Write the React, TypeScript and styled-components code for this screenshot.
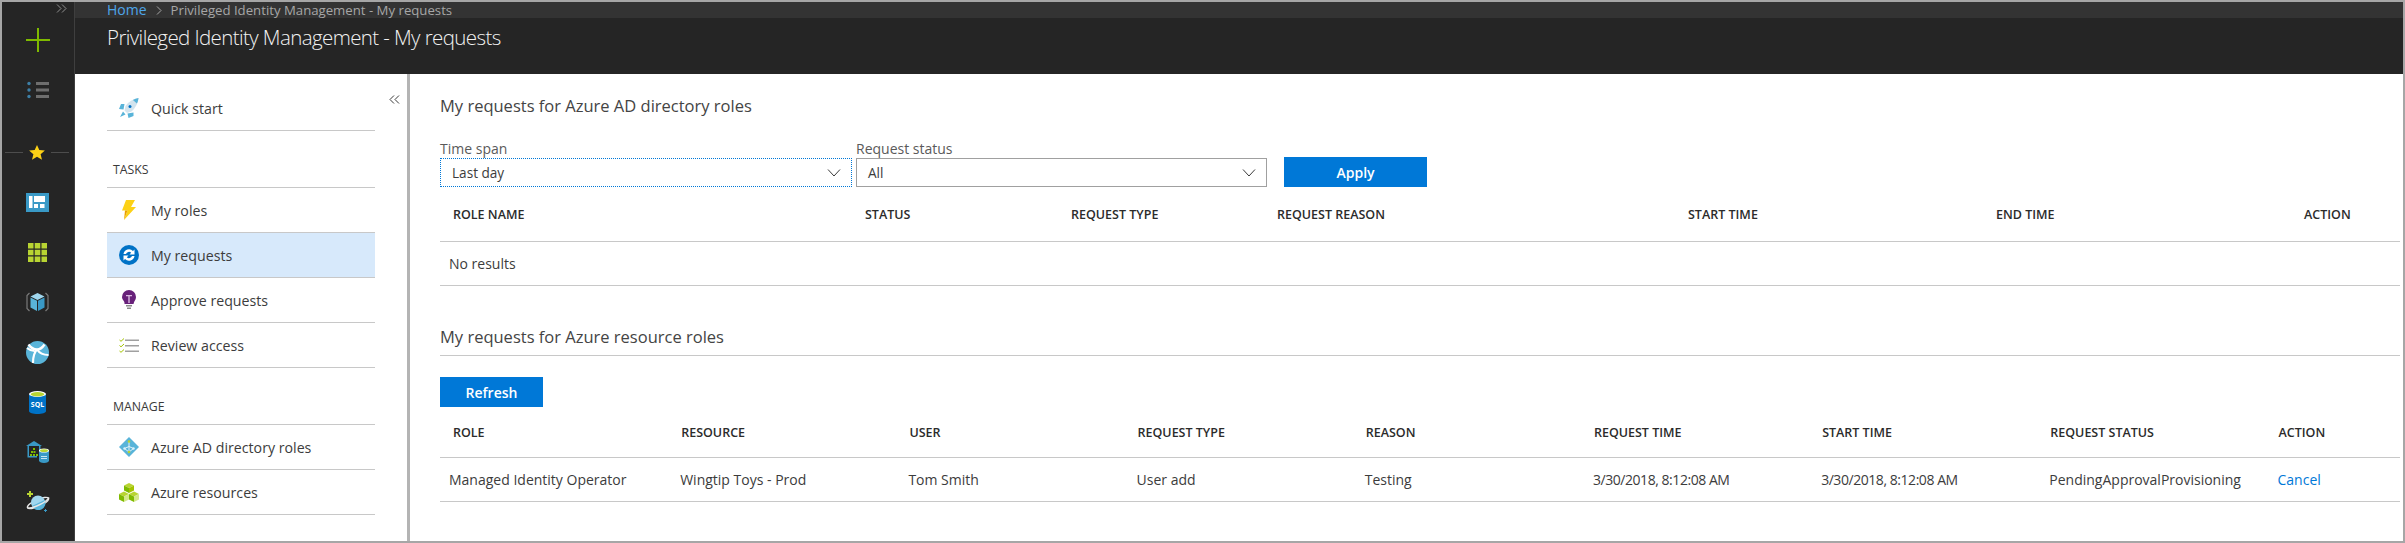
import styled, { createGlobalStyle } from 'styled-components'

const GlobalStyle = createGlobalStyle`
  html, body {
    margin: 0;
    padding: 0;
    background: #fff;
  }
  * {
    box-sizing: border-box;
  }
`

const roleHeaders = ['ROLE NAME', 'STATUS', 'REQUEST TYPE', 'REQUEST REASON', 'START TIME', 'END TIME', 'ACTION']
const resourceHeaders = ['ROLE', 'RESOURCE', 'USER', 'REQUEST TYPE', 'REASON', 'REQUEST TIME', 'START TIME', 'REQUEST STATUS', 'ACTION']
const resourceRow = ['Managed Identity Operator', 'Wingtip Toys - Prod', 'Tom Smith', 'User add', 'Testing']
const resourceTimes = ['3/30/2018, 8:12:08 AM', '3/30/2018, 8:12:08 AM']

const ROLE_COLS = '412px 206px 206px 411px 308px 308px 1fr'
const RESOURCE_COLS = 'repeat(8, 228.2px) 1fr'

export default function App() {
  return (
    <Frame>
      <GlobalStyle />
      <Sidebar>
        <Expand>
          <svg width="11" height="9" viewBox="0 0 11 9" fill="none" stroke="#8f8f8f" strokeWidth="1">
            <path d="M1 0.5 5 4.5 1 8.5M6 0.5 10 4.5 6 8.5" />
          </svg>
        </Expand>
        <SideItem>
          <svg width="24" height="24" viewBox="0 0 24 24">
            <path d="M11 0h2v11h11v2H13v11h-2V13H0v-2h11z" fill="#7fba00" />
          </svg>
        </SideItem>
        <SideItem>
          <svg width="22" height="18" viewBox="0 0 22 18">
            <circle cx="2" cy="2.5" r="1.7" fill="#3d7fa6" />
            <circle cx="2" cy="9" r="1.7" fill="#3d7fa6" />
            <circle cx="2" cy="15.5" r="1.7" fill="#3d7fa6" />
            <path d="M9 1h13v3H9zM9 7.5h13v3H9zM9 14h13v3H9z" fill="#6e6e6e" />
          </svg>
        </SideItem>
        <FavItem>
          <FavRule />
          <svg width="16" height="15" viewBox="0 0 16 15">
            <path d="M8 0l2.3 5.1 5.6.5-4.3 3.6 1.4 5.5L8 11.7l-5 3 1.4-5.5L.1 5.6l5.6-.5z" fill="#fcd116" />
          </svg>
          <FavRule />
        </FavItem>
        <SideItem>
          <svg width="23" height="19" viewBox="0 0 23 19">
            <path d="M0 0h23v19H0z" fill="#3999c6" />
            <path d="M3 3h3.500v12H3zM8 3h11v6H8zM8 11h4v4H8zM14 11h4.500v4H14z" fill="#fff" />
          </svg>
        </SideItem>
        <SideItem>
          <svg width="19" height="19" viewBox="0 0 19 19" fill="#b8d432">
            <path d="M0 0h5.500v5.500H0zM6.700 0h5.600v5.500H6.700zM13.500 0H19v5.500h-5.500zM0 6.700h5.500v5.600H0zM6.700 6.700h5.600v5.600H6.700zM13.500 6.700H19v5.600h-5.500zM0 13.500h5.500V19H0zM6.700 13.500h5.600V19H6.700zM13.500 13.500H19V19h-5.500z" />
          </svg>
        </SideItem>
        <SideItem>
          <svg width="23" height="20" viewBox="0 0 23 20">
            <path d="M3.500 1 1 3.500v13L3.500 19M19.500 1 22 3.500v13L19.500 19" fill="none" stroke="#7a7a7a" strokeWidth="1.200" />
            <path d="M11.500 1l7 3.500-7 3.500-7-3.500z" fill="#a0d7ef" />
            <path d="M4.500 5.500l6.500 3.300V19l-6.500-3.500z" fill="#59b4d9" />
            <path d="M18.500 5.500L12 8.800V19l6.500-3.500z" fill="#3999c6" />
          </svg>
        </SideItem>
        <SideItem>
          <svg width="23" height="23" viewBox="0 0 23 23">
            <circle cx="11.500" cy="11.500" r="11.500" fill="#59b4d9" />
            <path d="M2.500 3.500C5 7 7.500 8.500 11 8.500c3 0 5.500-2 7.500-5" fill="none" stroke="#fff" strokeWidth="2.400" />
            <path d="M11 8.500c2 3 5.500 5.500 11.500 5.500M11 8.500c-2.500 2.500-4 7-4 13.500M1 7c2.500 2 5 3 7.500 3" fill="none" stroke="#fff" strokeWidth="2.200" />
          </svg>
        </SideItem>
        <SideItem>
          <svg width="17" height="23" viewBox="0 0 17 23">
            <path d="M0 3v17c0 2 4 3 8.500 3s8.500-1 8.500-3V3z" fill="#0072c6" />
            <ellipse cx="8.500" cy="3" rx="8.500" ry="3" fill="#fff" />
            <ellipse cx="8.500" cy="3.300" rx="6.800" ry="2.200" fill="#b8d432" />
            <text x="8.500" y="16" textAnchor="middle" fontFamily="'Open Sans', sans-serif" fontSize="7" fontWeight="700" fill="#fff">SQL</text>
          </svg>
        </SideItem>
        <SideItem>
          <svg width="23" height="22" viewBox="0 0 23 22">
            <path d="M8 0l8 5H0z" fill="#3999c6" />
            <path d="M1.500 5h1.500v10h8v1.500H1.500zM13 5h1.500v5H13z" fill="#3999c6" />
            <path d="M7 7h2v2H7zM5 10h2v2H5zM7.500 10h2v2h-2zM4 13h2v2H4zM7 13h2v2H7zM10 13h2v2h-2z" fill="#7fba00" />
            <path d="M13 9.500v10c0 1.500 2 2.500 5 2.500s5-1 5-2.500v-10z" fill="#3999c6" />
            <ellipse cx="18" cy="9.500" rx="5" ry="2" fill="#fff" />
            <ellipse cx="18" cy="9.700" rx="4" ry="1.400" fill="#b8d432" />
            <path d="M15 15h6v1h-6zM15 17h6v1h-6z" fill="#c4e6f5" />
          </svg>
        </SideItem>
        <SideItem>
          <svg width="24" height="22" viewBox="0 0 24 22">
            <path d="M3 0h2v2h2v2H5v2H3V4H1V2h2z" fill="#b8d432" />
            <path d="M19 18h1v1h1v1h-1v1h-1v-1h-1v-1h1z" fill="#3999c6" />
            <ellipse cx="12" cy="12" rx="11.500" ry="3.500" transform="rotate(-24 12 12)" fill="none" stroke="#e8e8e8" strokeWidth="1.400" />
            <circle cx="12" cy="11.500" r="7" fill="#a0d7ef" />
            <path d="M6 15a7 7 0 0 0 12.800-6c-3 1-9 4.500-12.800 6z" fill="#59b4d9" />
            <path d="M1.500 16.800C4 17.500 9 16 14 13.500s8-5 9-7" fill="none" stroke="#e8e8e8" strokeWidth="1.400" />
          </svg>
        </SideItem>
      </Sidebar>
      <Main>
        <Breadcrumb>
          <HomeLink>Home</HomeLink>
          <svg width="6" height="9" viewBox="0 0 6 9" fill="none" stroke="#a6a6a6" strokeWidth="1">
            <path d="M1 .5 5 4.500 1 8.500" />
          </svg>
          <span>Privileged Identity Management - My requests</span>
        </Breadcrumb>
        <TitleBar>Privileged Identity Management - My requests</TitleBar>
        <Body>
          <Nav>
            <Collapse>
              <svg width="11" height="9" viewBox="0 0 11 9" fill="none" stroke="#3a3a3a" strokeWidth="1">
                <path d="M5 .5 1 4.500 5 8.500M10 .5 6 4.500 10 8.500" />
              </svg>
            </Collapse>
            <NavItem>
              <IconSlot>
                <svg width="20" height="20" viewBox="0 0 20 20">
                  <path d="M19.500 0C14 1 9.500 3.500 6.500 8l-1 4.500 2.500 2.500 4.500-1.500c3.500-3 6.500-8 7-13.500z" fill="#d3e4ee" />
                  <path d="M19.500 0c-2 .4-4 1-5.600 1.900l4 3.700C18.800 3.900 19.300 2 19.500 0z" fill="#59b4d9" />
                  <circle cx="11" cy="8.500" r="1.500" fill="#0072c6" />
                  <path d="M5.500 6H2L0 11l4.500.5zM14.500 14.500V18l-5 2L8.500 15.500zM4 13.500 1 19l5.500-2.500z" fill="#59b4d9" />
                </svg>
              </IconSlot>
              Quick start
            </NavItem>
            <NavHeading>TASKS</NavHeading>
            <NavItem>
              <IconSlot>
                <svg width="14" height="20" viewBox="0 0 14 20">
                  <path d="M4 0h9L9 7h5L2 20l3.500-9.500H0z" fill="#fcd116" />
                  <path d="M2 20 5.500 10.500H3z" fill="#e8a000" />
                </svg>
              </IconSlot>
              My roles
            </NavItem>
            <NavItem $active>
              <IconSlot>
                <svg width="20" height="20" viewBox="0 0 20 20">
                  <circle cx="10" cy="10" r="10" fill="#0072c6" />
                  <path d="M4.500 9A5.500 5.500 0 0 1 14 6l1.500-1.500V9.500h-5l1.700-1.800A3.200 3.200 0 0 0 7 9zM15.500 11A5.500 5.500 0 0 1 6 14l-1.500 1.500v-5h5l-1.700 1.800A3.200 3.200 0 0 0 13 11z" fill="#fff" />
                </svg>
              </IconSlot>
              My requests
            </NavItem>
            <NavItem>
              <IconSlot>
                <svg width="14" height="20" viewBox="0 0 14 20">
                  <path d="M7 0a7 7 0 0 1 7 7c0 3-2 4-2.500 7h-9C3 11 0 10 0 7a7 7 0 0 1 7-7z" fill="#68217a" />
                  <path d="M4 5h6v1.300H7.700V13H6.300V6.300H4z" fill="#d9b8e0" />
                  <path d="M4 15h6v1.500H4zM5 17.500h4V19H5z" fill="#8a8a8a" />
                </svg>
              </IconSlot>
              Approve requests
            </NavItem>
            <NavItem>
              <IconSlot>
                <svg width="20" height="15" viewBox="0 0 20 15">
                  <path d="M6 1.500h14v1.500H6zM6 7h14v1.500H6zM6 12.500h14V14H6z" fill="#a0a0a0" />
                  <path d="M.5 2 2 3.300 5 .5M.5 7.500 2 8.800 5 6M.5 13 2 14.300 5 11.500" fill="none" stroke="#a4c400" strokeWidth="1" />
                </svg>
              </IconSlot>
              Review access
            </NavItem>
            <NavHeading>MANAGE</NavHeading>
            <NavItem>
              <IconSlot>
                <svg width="20" height="20" viewBox="0 0 20 20">
                  <path d="M10 0l10 10-10 10L0 10z" fill="#59b4d9" />
                  <path d="M10 4.500v10.500M10 9.500 5.500 11.500M10 9.500l4.500 2M10 15l-4.500-3.500M10 15l4.500-3.500" stroke="#e0f2fa" strokeWidth="1" fill="none" />
                  <circle cx="10" cy="4.500" r="1.300" fill="#b8d432" />
                  <circle cx="5.500" cy="11.500" r="1.200" fill="#e0f2fa" />
                  <circle cx="14.500" cy="11.500" r="1.200" fill="#e0f2fa" />
                  <circle cx="10" cy="15" r="1.300" fill="#b8d432" />
                </svg>
              </IconSlot>
              Azure AD directory roles
            </NavItem>
            <NavItem>
              <IconSlot>
                <svg width="20" height="19" viewBox="0 0 20 19">
                  <path d="M10 0l5 2.500L10 5 5 2.500z" fill="#b8d432" />
                  <path d="M5 2.500 10 5v5L5 7.500z" fill="#7fba00" />
                  <path d="M15 2.500 10 5v5l5-2.500z" fill="#a4c400" />
                  <path d="M5 8.500l5 2.500-5 2.500L0 11z" fill="#b8d432" />
                  <path d="M0 11l5 2.500V19l-5-2.500z" fill="#7fba00" />
                  <path d="M10 11 5 13.500V19l5-2.500z" fill="#d4e88a" />
                  <path d="M15 8.500l5 2.500-5 2.500-5-2.500z" fill="#b8d432" />
                  <path d="M10 11l5 2.500V19l-5-2.500z" fill="#7fba00" />
                  <path d="M20 11l-5 2.500V19l5-2.500z" fill="#d4e88a" />
                </svg>
              </IconSlot>
              Azure resources
            </NavItem>
          </Nav>
          <Splitter />
          <Content>
            <SectionTitle>My requests for Azure AD directory roles</SectionTitle>
            <Filters>
              <Field $width={416}>
                <FieldLabel>Time span</FieldLabel>
                <SelectBox $focused>
                  Last day
                  <Chevron />
                </SelectBox>
              </Field>
              <Field $width={415}>
                <FieldLabel>Request status</FieldLabel>
                <SelectBox>
                  All
                  <Chevron />
                </SelectBox>
              </Field>
              <ApplyButton>Apply</ApplyButton>
            </Filters>
            <HeaderRow $cols={ROLE_COLS} $height={55}>
              {roleHeaders.map(h => <HeadCell key={h}>{h}</HeadCell>)}
            </HeaderRow>
            <BodyRow $cols="1fr">
              <BodyCell>No results</BodyCell>
            </BodyRow>
            <SectionTitle $ruled>My requests for Azure resource roles</SectionTitle>
            <RefreshButton>Refresh</RefreshButton>
            <HeaderRow $cols={RESOURCE_COLS} $height={51}>
              {resourceHeaders.map((h, i) => <HeadCell key={i}>{h}</HeadCell>)}
            </HeaderRow>
            <BodyRow $cols={RESOURCE_COLS}>
              {resourceRow.map(c => <BodyCell key={c}>{c}</BodyCell>)}
              {resourceTimes.map((c, i) => <TimeCell key={i}>{c}</TimeCell>)}
              <BodyCell>PendingApprovalProvisioning</BodyCell>
              <BodyCell><CancelLink>Cancel</CancelLink></BodyCell>
            </BodyRow>
          </Content>
        </Body>
      </Main>
    </Frame>
  )
}

function Chevron() {
  return (
    <ChevronIcon width="14" height="8" viewBox="0 0 14 8" fill="none" stroke="#3a3a3a" strokeWidth="1">
      <path d="M1 .5 7 7 13 .5" />
    </ChevronIcon>
  )
}

const Frame = styled.div`
  width: 2405px;
  height: 543px;
  display: flex;
  border: 2px solid #a6a6a6;
  overflow: hidden;
  font-family: 'Open Sans', 'Liberation Sans', sans-serif;
  background: #fff;
`

const Sidebar = styled.aside`
  width: 73px;
  flex: none;
  background: #252525;
  border-right: 1px solid #3f3f3f;
  display: flex;
  flex-direction: column;
  align-items: center;
`

const Expand = styled.div`
  height: 13px;
  width: 100%;
  display: flex;
  align-items: center;
  justify-content: flex-end;
  padding-right: 7px;
`

const SideItem = styled.div`
  height: 50px;
  flex: none;
  width: 100%;
  display: flex;
  align-items: center;
  justify-content: center;
  padding-right: 1px;
`

const FavItem = styled(SideItem)`
  margin-top: 12px;
  gap: 6px;
  padding: 0 5px 0 3px;
`

const FavRule = styled.span`
  flex: 1;
  height: 1px;
  background: #4d4d4d;
`

const Main = styled.div`
  flex: 1;
  min-width: 0;
  display: flex;
  flex-direction: column;
`

const Breadcrumb = styled.div`
  height: 16px;
  flex: none;
  background: #333;
  padding-left: 32px;
  display: flex;
  align-items: center;
  gap: 9px;
  color: #a6a6a6;
  font-size: 13.2px;
  line-height: 16px;
`

const HomeLink = styled.span`
  color: #4ea6ea;
  font-size: 14px;
`

const TitleBar = styled.div`
  height: 56px;
  flex: none;
  background: #252525;
  color: #f2f2f2;
  padding: 5px 0 0 32px;
  font-size: 20.5px;
  font-weight: 300;
  letter-spacing: -0.6px;
  line-height: 28px;
`

const Body = styled.div`
  flex: 1;
  min-height: 0;
  display: flex;
`

const Nav = styled.nav`
  position: relative;
  width: 332px;
  flex: none;
  padding: 12px 32px 0;
`

const Collapse = styled.div`
  position: absolute;
  top: 21px;
  right: 7px;
  line-height: 0;
`

const NavItem = styled.div<{ $active?: boolean }>`
  height: 45px;
  display: flex;
  align-items: center;
  border-bottom: 1px solid #c8c8c8;
  background: ${p => (p.$active ? '#d7e9fb' : 'transparent')};
  color: #3c3c3c;
  font-size: 14.2px;
`

const IconSlot = styled.span`
  width: 44px;
  flex: none;
  display: flex;
  justify-content: center;
  line-height: 0;
`

const NavHeading = styled.div`
  height: 57px;
  padding: 31px 0 0 6px;
  border-bottom: 1px solid #c8c8c8;
  color: #3a3a3a;
  font-size: 12.3px;
  font-weight: 500;
  line-height: 16px;
`

const Splitter = styled.div`
  width: 3px;
  flex: none;
  background: #b4b4b4;
`

const Content = styled.main`
  flex: 1;
  min-width: 0;
  padding: 20px 3px 0 30px;
`

const SectionTitle = styled.h2<{ $ruled?: boolean }>`
  margin: ${p => (p.$ruled ? '39px 0 0' : '0')};
  height: ${p => (p.$ruled ? '31px' : '24px')};
  border-bottom: ${p => (p.$ruled ? '1px solid #c8c8c8' : 'none')};
  color: #444;
  font-size: 16.5px;
  font-weight: 400;
  line-height: 24px;
`

const Filters = styled.div`
  margin-top: 23px;
  display: flex;
  align-items: flex-end;
`

const Field = styled.div<{ $width: number }>`
  width: ${p => p.$width}px;
  padding-right: 4px;
  flex: none;
`

const FieldLabel = styled.div`
  height: 17px;
  color: #5a5a5a;
  font-size: 14px;
  line-height: 16px;
`

const SelectBox = styled.div<{ $focused?: boolean }>`
  position: relative;
  height: 29px;
  display: flex;
  align-items: center;
  padding-left: 11px;
  border: 1px ${p => (p.$focused ? 'dotted #0078d7' : 'solid #a0a0a0')};
  color: #3c3c3c;
  font-size: 13.6px;
`

const ChevronIcon = styled.svg`
  position: absolute;
  right: 10px;
  top: 10px;
`

const ApplyButton = styled.button`
  width: 143px;
  height: 30px;
  margin-left: 13px;
  border: 0;
  padding: 0;
  background: #0078d7;
  color: #fff;
  font-family: inherit;
  font-size: 14px;
  font-weight: 600;
`

const RefreshButton = styled(ApplyButton)`
  display: block;
  width: 103px;
  margin: 21px 0 0;
`

const HeaderRow = styled.div<{ $cols: string; $height: number }>`
  display: grid;
  grid-template-columns: ${p => p.$cols};
  height: ${p => p.$height}px;
  align-items: center;
  border-bottom: 1px solid #c8c8c8;
`

const HeadCell = styled.div`
  padding-left: 13px;
  color: #2b2b2b;
  font-size: 12.5px;
  font-weight: 600;
  white-space: nowrap;
`

const BodyRow = styled.div<{ $cols: string }>`
  display: grid;
  grid-template-columns: ${p => p.$cols};
  height: 44px;
  align-items: center;
  border-bottom: 1px solid #c8c8c8;
`

const BodyCell = styled.div`
  padding-left: 12px;
  color: #3c3c3c;
  font-size: 14px;
  white-space: nowrap;
  &:first-child {
    padding-left: 9px;
  }
`

const TimeCell = styled(BodyCell)`
  letter-spacing: -0.45px;
`

const CancelLink = styled.span`
  color: #0078d7;
`
